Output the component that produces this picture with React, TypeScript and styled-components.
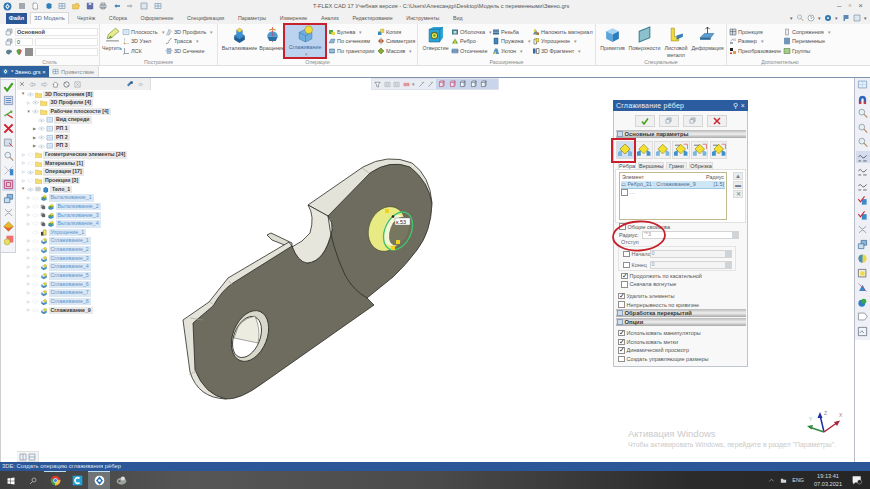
import React from "react";
import styled, { createGlobalStyle } from "styled-components";

const Global = createGlobalStyle`
  html, body { margin: 0; padding: 0; background: #fff; }
  * { box-sizing: border-box; }
  body { font-family: "Liberation Sans", "Noto Sans", Arial, sans-serif; font-size: 6px; color: #4c4c4c; }
`;

const B = "#3f86c8", Y = "#f2dc3a", G = "#58a83c", R = "#d8343c", D = "#4a5560";
const icons: Record<string, React.ReactNode> = {
  logo: <><circle cx="8" cy="8" r="7" fill="#2f78b8" /><path d="M8 3l4 5-4 5-4-5z" fill="#fff" /><circle cx="8" cy="8" r="1.6" fill="#2f78b8" /></>,
  menu: <path d="M2 4h12M2 8h12M2 12h12" stroke="#44505c" strokeWidth="1.8" />,
  doc: <path d="M4 2h6l3 3v9H4z" fill="#fff" stroke="#55606a" />,
  blue: <path d="M3 4l5-2 5 2v8l-5 2-5-2z" fill="#2f7fb8" />,
  grid: <path d="M2 3h12v10H2zM2 8h12M8 3v10" fill="#e8f0f8" stroke="#5a7a98" />,
  folderO: <path d="M1 5h5l1-2h6v3h2l-2 8H1z" fill="#f2c85a" stroke="#c09020" strokeWidth=".7" />,
  save: <path d="M2 2h12v12H2z M5 2v4h6V2 M5 9h6v5H5z" fill="#6a78b8" stroke="#47558f" strokeWidth=".7" />,
  print: <path d="M4 2h8v4H4zM2 6h12v6H2zM5 10h6v4H5z" fill="#dde2e6" stroke="#5a6670" />,
  undo: <path d="M3 8l4-4v2.5h7v3H7V12z" fill="#2f78b8" />,
  redo: <path d="M13 8L9 4v2.5H2v3h7V12z" fill="#aab2b8" />,
  pic: <path d="M2 2h12v12H2z" fill="#dfe6ee" stroke="#56708c" />,
  plane: <><path d="M2 3h12v10H2z" fill="#e4effa" stroke="#6f93bb" /><path d="M2 8h12M8 3v10" stroke="#a4bfdc" strokeWidth=".6" /></>,
  layers: <><path d="M5 2h9v8H5z" fill="#cfd8e2" stroke="#6b7884" /><path d="M2 6h9v8H2z" fill="#eef2f6" stroke="#6b7884" /></>,
  palette: <path d="M2 7c0-4 12-5 12 0 0 3-4 2-5 6-3 1-7-2-7-6z" fill="#5c7f8c" />,
  shield: <><path d="M8 2l5 2c0 5-2 8-5 10-3-2-5-5-5-10z" fill={G} /><path d="M8 2l5 2c0 5-2 8-5 10z" fill="#d8556c" /></>,
  pen: <><path d="M2 14h12" stroke="#888" /><path d="M3 12l1-4 7-6 3 3-7 6z" fill="#e7ec8c" stroke="#8a9048" strokeWidth=".7" /><path d="M4 12l2-3 2 2z" fill="#6aa040" /></>,
  node: <><path d="M5 2v12M5 13h9" stroke={D} strokeWidth=".8" strokeDasharray="1.4 1" /><circle cx="5" cy="13" r="1.6" fill="#d09020" /></>,
  lcs: <path d="M5 2v11h9M5 13l-3 2" stroke="#4a5a6c" strokeWidth="1.1" fill="none" />,
  profile: <path d="M3 14L8 3l5 3-5 8zM8 3v11" fill="#e8eef4" stroke="#6c8090" strokeWidth=".8" />,
  trace: <path d="M2 13c5 0 5-2 6-5s3-5 6-5" stroke="#334" strokeWidth="1.1" fill="none" strokeDasharray="3 1" />,
  section: <><path d="M4 3h8v3H4zM4 9h8v4H4z" fill="#a7c4dd" stroke="#557" strokeWidth=".5" /><path d="M1 7.5h14" stroke="#2f78b8" /></>,
  extrude: <><path d="M3 9l5-3 5 3-5 3z" fill="#2e80c0" /><path d="M3 9v4l5 3v-4zM13 9v4l-5 3v-4z" fill="#1e5f96" /><path d="M8 2l3 2-3 2-3-2z" fill="#f1d84c" stroke="#8c7a20" strokeWidth=".4" /><path d="M5 4v5l3 2V6zM11 4v5L8 11V6z" fill="#3f92d0" /></>,
  revolve: <><path d="M3 10a5 5 0 0 1 10 0z" fill="#4d9ad2" /><path d="M8 1v14" stroke={R} strokeWidth=".7" strokeDasharray="2 1" /><path d="M3 10h10l-2 4H5z" fill="#2a6ea6" /><path d="M5 4q3-2 6 0" stroke="#d08a20" fill="none" /></>,
  smooth: <><path d="M2 7l6-3 6 3v6l-6 3-6-3z" fill="#6eaede" stroke="#3b76a8" strokeWidth=".5" /><path d="M8 10v6M2 7l6 3 6-3" stroke="#3b76a8" strokeWidth=".5" fill="none" /><circle cx="11" cy="4.5" r="3.6" fill={Y} stroke="#9a8a1a" strokeWidth=".5" /></>,
  bool: <><path d="M2 4h8v8H2z" fill={G} /><path d="M7 8h7v6H7z" fill="#e9d84e" /></>,
  loft: <path d="M2 12L6 4h8l-2 8z" fill="#8fb2d0" stroke="#3f6c96" strokeWidth=".7" />,
  path: <><path d="M3 4h10v8H3z" fill="#80a8cc" stroke="#33689a" /><path d="M3 8h10" stroke="#fff" /></>,
  copy: <><path d="M2 7h7v7H2z" fill="#3a88c4" /><path d="M7 2h7v7H7z" fill="#e7d64a" stroke="#897a1c" strokeWidth=".5" /></>,
  sym: <><path d="M2 8l5-5v10zM14 8L9 3v10z" fill="#b0562c" /><path d="M8 1v14" stroke="#333" strokeWidth=".6" /></>,
  array: <path d="M8 2l6 6-6 6-6-6z" fill="#87a83a" stroke="#506a20" />,
  hole: <><path d="M2 3l4-2h9v10l-3 4H2z" fill="#2aa3d8" /><path d="M2 3h10v12H2zM12 3l3-2" fill="none" stroke="#1b648e" strokeWidth=".6" /><circle cx="7" cy="9" r="3" fill="#e8e050" stroke="#5a6a2a" /><circle cx="7" cy="9" r="1.2" fill={G} /></>,
  shell: <><path d="M2 3h12v10H2z" fill="#3f7c9a" /><path d="M5 6h6v5H5z" fill="#cfe0c8" /></>,
  rib: <><path d="M2 13L8 3l6 10z" fill="#5fa040" /><path d="M8 3l2 10H6z" fill={Y} /></>,
  cut: <><path d="M2 4h12v8H2z" fill="#8cb0d4" stroke="#4a7298" /><path d="M1 8h14" stroke="#33507a" /></>,
  thread: <><path d="M2 3h12v10H2z" fill="#3a6c98" /><path d="M2 6h12M2 9h12" stroke="#bcd0e4" /></>,
  spring: <path d="M4 2h8v12H4z" fill="#4384b8" stroke="#27587e" />,
  draft: <><path d="M2 14L6 3h5l3 11z" fill="#5a92c0" /><path d="M3 14h5V8z" fill="#e6d648" /></>,
  mat: <><path d="M2 13L7 3l7 10z" fill="#6e8ea0" /><circle cx="6" cy="5" r="2.6" fill="#e6c838" /><path d="M9 9h5v5H9z" fill="#b8722a" /></>,
  simp: <><path d="M4 4h5v10H4z" fill="none" stroke="#333" /><path d="M8 3h5v7H8z" fill={Y} stroke="#8a7a10" /></>,
  frag: <><path d="M2 3h5v10H2z" fill="#3566a0" /><path d="M9 3h5v10H9z" fill="none" stroke="#222" /><path d="M7 8h2" stroke="#222" /></>,
  cube: <><path d="M2 5l6-3 6 3-6 3z" fill="#a6d4f2" /><path d="M2 5v7l6 3V8z" fill="#5aa6dc" /><path d="M14 5v7l-6 3V8z" fill="#2a7dbc" /></>,
  surf: <path d="M3 5l10-4v10L3 15z" fill="#8cc0cc" stroke="#3c7f92" />,
  sheet: <><path d="M3 2h3v8h4v4H3z" fill={Y} stroke="#a6901c" strokeWidth=".6" /><path d="M8 9l6-2v3l-6 3z" fill="#3a7fb8" /></>,
  deform: <><path d="M1 11l4-4h9l-3 4z" fill="#5a9ccf" stroke="#2e6a98" strokeWidth=".5" /><path d="M1 11h10v2H1z" fill="#2e6a98" /><path d="M8 1v6M6 3l2-2 2 2" stroke="#222" fill="none" strokeWidth=".7" /></>,
  proj: <path d="M2 2h12v12H2zM2 7h12M7 2v12" fill="#cfd7de" stroke="#47525c" />,
  size: <><path d="M2 10h6v4H2z" fill="#9aa8b4" /><path d="M8 3h6v5H8z" fill="#c7d2dc" /><path d="M3 8l5-4" stroke="#456" /></>,
  trans: <><path d="M2 2h6v6H2z" fill="#222" /><path d="M8 8h6v6H8z" fill="#d8a040" /><path d="M2 11h4v3H2z" fill={R} /></>,
  mate: <path d="M5 2h6v12H5z" fill="#e8eaec" stroke="#68727c" />,
  vars: <path d="M3 2h10v12H3zM3 6h10M3 10h10" fill="#7ea8cc" stroke="#3f6a90" />,
  group: <path d="M2 3h12v10H2z" fill="#a6cc8a" stroke="#3e7028" />,
  help: <><circle cx="8" cy="8" r="6" fill="#fff" stroke="#56646e" /><path d="M6 6q2-2 4 0t-2 3v1" stroke="#56646e" fill="none" /></>,
  gear: <><circle cx="8" cy="8" r="6" fill="#2f78b0" /><circle cx="8" cy="8" r="2.2" fill="#dcecf7" /></>,
  flag: <path d="M3 2h10v8H6v4H3z" fill="#5b88b4" />,
  okGreen: <path d="M2 9l4 5 8-11" stroke="#3ea018" strokeWidth="3" fill="none" />,
  xRed: <path d="M2 2l12 12M14 2L2 14" stroke="#cf2430" strokeWidth="3" />,
  rows: <><path d="M2 2h12v12H2z" fill="#dce4f4" stroke="#6a7ea6" /><path d="M4 5h8M4 8h8M4 11h8" stroke="#2f60a0" /></>,
  branch: <><path d="M2 10l10-6" stroke={G} strokeWidth="2" /><path d="M6 8l8 5" stroke={R} strokeWidth="2" /><circle cx="12" cy="4" r="1.8" fill={G} /></>,
  dim: <><path d="M2 3h10v10H2z" fill="#d4dee8" stroke="#7a8a9a" /><path d="M9 9l5 5" stroke={R} strokeWidth="1.4" /></>,
  zoomI: <><circle cx="7" cy="6" r="4.2" fill="#e6eef6" stroke="#7e8c98" /><path d="M10 9l5 5" stroke="#b08a60" strokeWidth="1.6" /></>,
  angle: <><path d="M2 14L14 2M2 2l12 12" stroke="#9ca8b4" /><path d="M10 6h5v9h-5z" fill="#3f86c8" /></>,
  pink: <path d="M2 2h12v12H2zM5 5h6v6H5z" fill="#e8c8d4" stroke="#b03a70" strokeWidth="1.2" />,
  boxes: <><path d="M6 2h8v7H6z" fill="#8ab4d8" stroke="#3a6a94" /><path d="M2 7h8v7H2z" fill="#c8dcec" stroke="#3a6a94" /></>,
  arc: <path d="M3 3q5 8 10 0M3 13q5-8 10 0" stroke="#7a8690" fill="none" />,
  yellowD: <><path d="M8 1l7 7-7 7-7-7z" fill="#e8b82a" stroke="#8a6a10" strokeWidth=".6" /><path d="M8 10l7-2-7 7-7-7z" fill={R} opacity=".65" /></>,
  redSq: <><path d="M5 1h10v10H5z" fill="#f0726e" /><circle cx="6" cy="10" r="4.4" fill="#eadf5c" stroke="#7e7a24" strokeWidth=".5" /></>,
  tbox: <><path d="M3 5l5-3 5 3v7l-5 3-5-3z" fill="#2a7dc0" /><path d="M3 5l5 3 5-3M8 8v7" stroke="#a8d0ec" strokeWidth=".6" fill="none" /></>,
  ext: <><path d="M3 8l6-3 5 3-6 3z" fill="#4fa038" stroke="#2a601c" strokeWidth=".5" /><path d="M3 8v4l5 3v-4z" fill="#2b78b4" /><path d="M14 8v4l-6 3v-4z" fill="#3a92cc" /><path d="M6 6l4-4 4 3-4 3z" fill={Y} stroke="#806f14" strokeWidth=".5" /></>,
  sm: <><path d="M3 8l5-3 6 3-6 3z" fill="#fff" stroke="#357ba8" strokeWidth=".7" /><path d="M3 8v4l5 3v-4zM14 8v4l-6 3v-4z" fill="#4b94c8" stroke="#2b6a94" strokeWidth=".4" /><circle cx="11" cy="6" r="3" fill={Y} stroke="#6e7c1a" strokeWidth=".6" /></>,
  mini: <><path d="M3 3h7v7H3z" fill="#ddd" stroke="#333" /><path d="M6 6h7v7H6z" fill="#667" stroke="#222" /></>,
  folder: <path d="M1 4h5l1 2h8v8H1z" fill="#f8dc70" stroke="#c9a838" strokeWidth=".8" />,
  eye: <><path d="M1 8q7-7 14 0-7 7-14 0z" fill="#fff" stroke="#a6b4c0" /><circle cx="8" cy="8" r="1.8" fill="#a6bccc" /></>,
  eyeDim: <path d="M1 8q7-7 14 0-7 7-14 0z" fill="#fff" stroke="#d8dee4" />,
  simpl: <><path d="M2 6h6v8H2z" fill="#444" /><path d="M7 2h6v11H7z" fill="#f6e85c" stroke="#8e8018" /></>,
  close: <path d="M3 3l10 10M13 3L3 13" stroke="#555" strokeWidth="1.6" />,
  back: <path d="M2 8l5-5v3h7v4H7v3z" fill="none" stroke="#8896a2" strokeWidth="1.1" />,
  fwd: <path d="M14 8L9 3v3H2v4h7v3z" fill="none" stroke="#8896a2" strokeWidth="1.1" />,
  home: <path d="M2 8l6-6 6 6h-2v6H4V8z" fill="#fff" stroke="#46525e" strokeWidth="1.2" />,
  clock: <><circle cx="8" cy="8" r="6" fill="#fff" stroke="#46525e" strokeWidth="1.6" /><path d="M4 4l8 8" stroke="#46525e" /></>,
  xbox: <path d="M2 2h12v12H2zM5 5l6 6M11 5l-6 6" fill="#f4f4f4" stroke="#6e7a84" />,
  wrench: <><path d="M2 10l6-6 3 3-6 6z" fill="#4c7fa8" /><circle cx="11" cy="5" r="3" fill="#2f6898" /></>,
  funnel: <path d="M2 3h12l-4 5v6l-4-2V8z" fill="#fff" stroke="#4a5660" strokeWidth="1.2" />,
  gbox: <path d="M2 3h12v10H2zM5 6h6v4H5z" fill="#eee" stroke="#8a949c" />,
  line: <><path d="M3 13L13 3" stroke="#48708a" strokeWidth="1.2" /><path d="M8 3h6" stroke={G} /></>,
  redbar: <path d="M2 5h12v6H2z" fill="#e49aa4" stroke="#cf6e7c" />,
  cubeP: <path d="M3 5h8v9H3zM3 5l2-3h8l-2 3M13 2v9l-2 3" fill="#f0dde6" stroke="#b0285a" strokeWidth="1.1" />,
  cubeN: <path d="M3 5h8v9H3zM3 5l2-3h8l-2 3M13 2v9l-2 3" fill="#eef2f8" stroke="#3a4a5a" strokeWidth="1.1" />,
  magnet: <><path d="M3 14V8a5 5 0 0 1 10 0v6h-3V8a2 2 0 0 0-4 0v6z" fill="#2f62c0" stroke="#1e3f86" strokeWidth=".4" /><path d="M3 14h3v-3H3zM10 14h3v-3h-3z" fill="#d8303c" /></>,
  tilde: <path d="M2 7q3-4 5 0t7-2M2 13h4M9 13h5" stroke="#333" fill="none" strokeWidth="1" />,
  checkBox: <><path d="M7 6h7v8H7z" fill="#3a8cc8" /><path d="M2 6l3 4 6-8" stroke="#d02838" strokeWidth="1.6" fill="none" /></>,
  ballG: <><circle cx="8" cy="8" r="6" fill="#e6d848" /><path d="M8 2a6 6 0 0 0 0 12z" fill="#4a8cc8" /></>,
  sqY: <><path d="M2 2h11v11H2z" fill="#eee" stroke="#555" /><path d="M5 5h6v6H5z" fill={Y} /></>,
  triB: <><path d="M3 13L8 4l5 9z" fill="#3a86c8" /><path d="M2 2l12 12" stroke={R} strokeWidth=".8" /></>,
  ballB: <><circle cx="7" cy="9" r="5" fill="#2d7fc0" /><circle cx="10" cy="6" r="3.6" fill="#3aa83c" /></>,
  tag: <path d="M2 3h9l4 5-4 5H2z" fill="#fff" stroke="#6e7a84" />,
  frame: <path d="M2 2h12v12H2zM4 10l3-3 3 3" fill="#f0f4f8" stroke="#526270" />,
  split: <path d="M2 2h12v12H2zM8 2v12" fill="#eef2f7" stroke="#5e7288" />,
  splitH: <path d="M2 2h12v12H2zM2 8h12" fill="#eef2f7" stroke="#5e7288" />,
  win: <path d="M1 3l6-1v5.500H1zM8 2l7-1v6.500H8zM1 8.500h6V14l-6-1zM8 8.500h7V15l-7-1z" fill="#fff" />,
  search: <><circle cx="10" cy="6" r="4" fill="none" stroke="#ddd" strokeWidth="1.2" /><path d="M7 9l-5 5" stroke="#ddd" strokeWidth="1.3" /></>,
  chrome: <><circle cx="8" cy="8" r="7" fill="#d8382c" /><path d="M8 8L2 5a7 7 0 0 0 5 10z" fill="#3d9c45" /><path d="M8 8l7-1a7 7 0 0 1-8 8z" fill="#f2c531" /><circle cx="8" cy="8" r="3" fill="#4a84e0" stroke="#fff" /></>,
  cblue: <><path d="M1 1h14v14H1z" fill="#21a3d6" /><path d="M11 5a4 4 0 1 0 0 6" fill="none" stroke="#fff" strokeWidth="2.200" /></>,
  tflex: <><circle cx="8" cy="8" r="7" fill="#fff" /><path d="M8 2l5 6-5 6-5-6z" fill="#1f6fb8" /><circle cx="8" cy="8" r="2" fill="#fff" /></>,
  app: <><ellipse cx="8" cy="9" rx="7" ry="5" fill="#9aa49a" /><circle cx="10" cy="5" r="3" fill="#ddd" /><circle cx="5" cy="9" r="1.6" fill="#556" /></>,
  caret: <path d="M3 10l5-5 5 5" stroke="#ccc" fill="none" strokeWidth="1.3" />,
  trayF: <path d="M2 4h5l1 2h6v7H2z" fill="#cfd6dc" />,
  note: <><path d="M1 2h13v10H5l-3 3v-3H1z" fill="#f0f0f0" /><circle cx="12" cy="11" r="3.400" fill="#222" stroke="#eee" strokeWidth=".6" /></>,
};

const SvgBox = styled.svg<{ $s: number }>`
  width: ${(p) => p.$s}px;
  height: ${(p) => p.$s}px;
  flex: none;
  display: block;
`;
const Ico = ({ k, s = 8 }: { k: string; s?: number }) => (
  <SvgBox $s={s} viewBox="0 0 16 16">{icons[k]}</SvgBox>
);

/* ---------- shell ---------- */
const Page = styled.div`
  width: 870px;
  height: 489px;
  display: flex;
  flex-direction: column;
  overflow: hidden;
  background: #fff;
`;
const TitleBar = styled.div`
  height: 12px;
  background: #f1f1f1;
  display: flex;
  align-items: center;
  position: relative;
  padding: 0 4px 0 3px;
`;
const Quick = styled.div`
  display: flex;
  align-items: center;
  gap: 5.6px;
  flex: 1;
`;
const TitleText = styled.div`
  position: absolute;
  left: 313px;
  top: 2px;
  font-size: 5.700px;
  line-height: 9px;
  color: #555;
  white-space: nowrap;
`;
const WinControls = styled.div`
  display: flex;
  gap: 7px;
  align-items: center;
  font-size: 8px;
  line-height: 10px;
  color: #666;
  padding-right: 3px;
`;
const MenuRow = styled.div`
  height: 12px;
  background: #f1f1f1;
  display: flex;
  align-items: flex-end;
  padding-left: 6px;
`;
const FileTab = styled.div`
  width: 21px;
  height: 11px;
  background: #2b5797;
  color: #fff;
  font-size: 5.8px;
  font-weight: bold;
  line-height: 11px;
  text-align: center;
  margin-right: 3px;
`;
const ActiveMenu = styled.div`
  width: 39px;
  height: 12px;
  background: #fbfbfb;
  border: 1px solid #d8d8d8;
  border-bottom: 0;
  color: #4a6e96;
  font-size: 6px;
  line-height: 11px;
  text-align: center;
  margin-right: 8px;
`;
const MenuItems = styled.div`
  display: flex;
  gap: 13.6px;
  flex: 1;
  height: 12px;
  align-items: center;
  font-size: 5.300px;
  color: #555;
`;
const MenuRight = styled.div`
  display: flex;
  align-items: center;
  gap: 3.200px;
  height: 12px;
  padding-right: 3px;
  font-size: 5px;
  color: #667;
`;

const Ribbon = styled.div`
  height: 42px;
  background: #fbfbfb;
  border-bottom: 1px solid #e0e0e0;
  display: flex;
`;
const Group = styled.div<{ $w: number; $last?: boolean }>`
  width: ${(p) => p.$w}px;
  flex: none;
  display: flex;
  flex-direction: column;
  border-right: ${(p) => (p.$last ? "none" : "1px solid #e3e3e3")};
`;
const GroupBody = styled.div`
  flex: 1;
  display: flex;
  padding: 2px 0 0 2px;
  min-height: 0;
`;
const GroupLabel = styled.div`
  height: 8px;
  line-height: 8px;
  margin-bottom: -1px;
  text-align: center;
  font-size: 5.2px;
  color: #8a8a8a;
`;
const Big = styled.div<{ $w: number; $on?: boolean }>`
  width: ${(p) => p.$w}px;
  height: 32px;
  flex: none;
  display: flex;
  flex-direction: column;
  align-items: center;
  font-size: 5.300px;
  line-height: 6.500px;
  text-align: center;
  color: ${(p) => (p.$on ? "#3a68a0" : "#505050")};
  background: ${(p) => (p.$on ? "#bcd3ef" : "transparent")};
  outline: ${(p) => (p.$on ? "2px solid #c9202e" : "none")};
  margin: ${(p) => (p.$on ? "-1px 3px 0 0" : "0")};
  white-space: nowrap;
`;
const BigIconSlot = styled.div`
  height: 17px;
  display: flex;
  align-items: flex-end;
  margin-bottom: 2px;
`;
const Col = styled.div<{ $w: number }>`
  width: ${(p) => p.$w}px;
  flex: none;
  display: flex;
  flex-direction: column;
  padding-top: 1px;
  gap: 0.6px;
`;
const Small = styled.div`
  height: 9px;
  display: flex;
  align-items: center;
  gap: 1px;
  font-size: 5.500px;
  color: #505050;
  white-space: nowrap;
`;
const Arrow = styled.span`
  color: #999;
  font-size: 5px;
  margin-left: 3px;
`;
const StyleRow = styled.div`
  height: 9.500px;
  display: flex;
  align-items: center;
  gap: 2px;
  padding-left: 3px;
`;
const Combo = styled.div<{ $w: number; $bold?: boolean }>`
  width: ${(p) => p.$w}px;
  height: 8px;
  border: 1px solid #e6e6e6;
  background: #fff;
  font-size: 5.600px;
  line-height: 6px;
  padding-left: 1px;
  font-weight: ${(p) => (p.$bold ? "bold" : "normal")};
  color: #444;
`;
const Swatch = styled.div`
  width: 8px;
  height: 8px;
  background: #8f8f8f;
`;

const DocTabs = styled.div`
  height: 11px;
  background: #fff;
  display: flex;
  align-items: stretch;
`;
const DocActive = styled.div`
  width: 49px;
  background: #2e629e;
  color: #fff;
  font-size: 5.8px;
  display: flex;
  align-items: center;
  gap: 2px;
  padding-left: 2px;
`;
const DocOther = styled.div`
  width: 50px;
  background: #f3f3f3;
  border-right: 1px solid #ddd;
  color: #888;
  font-size: 5.6px;
  display: flex;
  align-items: center;
  gap: 2px;
  padding-left: 3px;
`;
const Divider = styled.div`
  height: 1px;
  background: #7d93ad;
`;

const Main = styled.div`
  flex: 1;
  display: flex;
  min-height: 0;
`;
const LeftRail = styled.div`
  width: 17px;
  flex: none;
  background: #fff;
  border-left: 1px solid #cfcfcf;
  padding-top: 1px;
`;
const LeftStrip = styled.div`
  width: 15px;
  height: 174px;
  background: #f3f4f8;
  border: 1px solid #cfd0e4;
  border-left: 0;
  display: flex;
  flex-direction: column;
  align-items: center;
  padding-top: 1px;
  gap: 2.500px;
`;
const RailBtn = styled.div<{ $on?: boolean }>`
  width: 13px;
  height: 11.500px;
  display: flex;
  align-items: center;
  justify-content: center;
  background: ${(p) => (p.$on ? "#d4dcf0" : "transparent")};
`;
const Canvas = styled.div`
  flex: 1;
  position: relative;
  background: #fff;
`;
const RightRail = styled.div`
  width: 16px;
  flex: none;
  background: #fff;
  border-left: 1px solid #b8bcc8;
`;
const RightStrip = styled.div`
  background: #eff0f5;
  height: 262px;
  display: flex;
  flex-direction: column;
  align-items: center;
  padding-top: 1px;
  gap: 2.900px;
`;
const StripBtn = styled.div<{ $on?: boolean }>`
  width: 14px;
  height: 11.600px;
  display: flex;
  align-items: center;
  justify-content: center;
  background: ${(p) => (p.$on ? "#d5dcee" : "transparent")};
`;
const StatusBar = styled.div`
  height: 9px;
  background: #2b5698;
  color: #dfe8f4;
  font-size: 5.8px;
  line-height: 9px;
  padding-left: 2px;
`;
const Taskbar = styled.div`
  height: 18px;
  background: linear-gradient(90deg, #3d3d3d 0%, #565656 22%, #4a4a4a 50%, #2b2b2b 80%, #252525 100%);
  display: flex;
  align-items: stretch;
  color: #ddd;
`;
const Task = styled.div<{ $on?: boolean; $bar?: boolean; $w: number }>`
  width: ${(p) => p.$w}px;
  flex: none;
  display: flex;
  align-items: center;
  justify-content: center;
  background: ${(p) => (p.$on ? "#6f7477" : "transparent")};
  border-top: 1px solid ${(p) => (p.$bar ? "#bcdcf0" : "transparent")};
`;
const Tray = styled.div`
  margin-left: auto;
  display: flex;
  align-items: center;
  gap: 5px;
  padding-right: 8px;
  font-size: 5.4px;
`;
const Clock = styled.div`
  text-align: center;
  line-height: 8px;
  font-size: 5.6px;
  margin: 0 5px 0 5px;
`;

/* ---------- tree ---------- */
const TreeToolbar = styled.div`
  position: absolute;
  left: 0;
  top: 0;
  width: 134px;
  height: 12px;
  background: #efefef;
  border-right: 1px solid #ddd;
  display: flex;
  align-items: center;
  padding: 0 7px 0 2px;
  gap: 4.300px;
`;
const Push = styled.div`
  flex: 1;
`;
const Tree = styled.div`
  position: absolute;
  left: 0;
  top: 12px;
  width: 150px;
`;
const TreeRow = styled.div<{ $lvl: number }>`
  height: 8.650px;
  display: flex;
  align-items: center;
  gap: 1px;
  padding-left: ${(p) => p.$lvl * 5.5 + 3.5}px;
  white-space: nowrap;
`;
const Tw = styled.span`
  width: 5px;
  flex: none;
  font-size: 4.200px;
  line-height: 8px;
  color: #777;
  text-align: center;
`;
const TreeLabel = styled.span<{ $mode: string }>`
  font-size: 5.250px;
  line-height: 7.500px;
  padding: 0 2px;
  font-weight: ${(p) => (p.$mode === "sel" ? "normal" : "bold")};
  color: ${(p) => (p.$mode === "sel" ? "#5b95d0" : "#3c3c3c")};
  background: ${(p) => (p.$mode === "sel" ? "#dbe7f3" : "#e9e9e9")};
`;

/* ---------- canvas overlays ---------- */
const ViewBar = styled.div`
  position: absolute;
  left: 354px;
  top: 0;
  width: 128px;
  height: 12px;
  display: flex;
  background: #e9ecf2;
  border: 1px solid #dfe2ea;
`;
const ViewPart = styled.div<{ $tint?: boolean }>`
  display: flex;
  align-items: center;
  gap: ${(p) => (p.$tint ? 3 : 2.500)}px;
  padding: 0 2px;
  background: ${(p) => (p.$tint ? "#c9d5ea" : "transparent")};
  flex: ${(p) => (p.$tint ? 1 : "none")};
  font-size: 5px;
  color: #888;
`;
const PartSvg = styled.svg`
  position: absolute;
  left: 133px;
  top: 72px;
  width: 310px;
  height: 330px;
`;
const TriadSvg = styled.svg`
  position: absolute;
  left: 783px;
  top: 328px;
  width: 50px;
  height: 40px;
`;
const Watermark = styled.div`
  position: absolute;
  left: 611px;
  top: 350px;
  color: #cacaca;
  font-size: 9.500px;
  line-height: 12px;
  white-space: nowrap;
`;
const WatermarkSub = styled.div`
  font-size: 6.900px;
  line-height: 8px;
  margin-top: 1px;
`;
const CornerTools = styled.div`
  position: absolute;
  left: 0;
  bottom: 0;
  width: 22px;
  height: 11px;
  background: #f4f4f4;
  border: 1px solid #e0e0e0;
  border-left: 0;
  display: flex;
  align-items: center;
  padding-left: 2px;
  gap: 1px;
`;

/* ---------- dialog ---------- */
const Dialog = styled.div`
  position: absolute;
  left: 596px;
  top: 22px;
  width: 135px;
  height: 267px;
  background: #f8f8f8;
  border: 1px solid #bfc5cc;
  border-top: 0;
  display: flex;
  flex-direction: column;
`;
const DlgHead = styled.div`
  height: 11px;
  margin: 0 -1px;
  background: #2a5c9f;
  color: #e8f0f8;
  font-size: 7px;
  line-height: 11px;
  padding: 0 3px;
  display: flex;
  justify-content: space-between;
  letter-spacing: 0.2px;
`;
const DlgBtns = styled.div`
  height: 19px;
  display: flex;
  justify-content: center;
  align-items: center;
  gap: 4px;
  flex: none;
`;
const DlgBtn = styled.div`
  width: 20px;
  height: 12px;
  background: #f0f0f0;
  border: 1px solid #d6d6d6;
  display: flex;
  align-items: center;
  justify-content: center;
`;
const Section = styled.div`
  height: 8px;
  flex: none;
  display: flex;
  align-items: center;
  gap: 2px;
  background: linear-gradient(#b8b8b8, #efefef 50%, #a8a8a8);
  font-size: 5.800px;
  font-weight: bold;
  color: #333;
  margin: 0 1px 0 2px;
`;
const SecMark = styled.span`
  width: 5.500px;
  height: 5.500px;
  background: #cfdcec;
  border: 1px solid #8aa0ba;
  margin-left: 1px;
  flex: none;
`;
const ShapeRow = styled.div`
  height: 24px;
  flex: none;
  display: flex;
  align-items: center;
  padding-left: 2px;
  gap: 1.200px;
`;
const ShapeBtn = styled.div<{ $on?: boolean }>`
  width: ${(p) => (p.$on ? 18 : 17.400)}px;
  height: 18px;
  background: ${(p) => (p.$on ? "#cfe0f2" : "#f1f1f1")};
  border: 1px solid #ddd;
  display: flex;
  align-items: center;
  justify-content: center;
`;
const RedFrame = styled.div`
  position: absolute;
  left: -3px;
  top: 38px;
  width: 25px;
  height: 25px;
  border: 2px solid #c9202e;
`;
const Tabs = styled.div`
  height: 7px;
  flex: none;
  display: flex;
  padding-left: 4px;
  font-size: 5.500px;
  line-height: 7px;
  color: #444;
  gap: 2px;
`;
const Tab = styled.div<{ $on?: boolean; $w: number }>`
  width: ${(p) => p.$w}px;
  text-align: center;
  background: ${(p) => (p.$on ? "#fff" : "#eee")};
  border: 1px solid #ddd;
  border-bottom: 0;
  line-height: 6px;
`;
const Pane = styled.div`
  height: 54px;
  flex: none;
  margin: 0 1px 0 1px;
  background: #fff;
  border: 1px solid #e2e2e2;
  padding: 2px 0 0 3px;
  display: flex;
  gap: 6px;
`;
const ListBox = styled.div`
  width: 108px;
  height: 48px;
  border: 1px solid #c2b98c;
  background: #fff;
  flex: none;
  font-size: 5.400px;
  padding: 1px;
`;
const ListHead = styled.div`
  display: flex;
  justify-content: space-between;
  line-height: 7px;
  color: #555;
  padding: 0 1px;
`;
const ListSel = styled.div`
  display: flex;
  align-items: center;
  gap: 2px;
  background: #cfe6f6;
  border-bottom: 1px solid #9cc8e4;
  color: #4f6f90;
  height: 7.500px;
  justify-content: space-between;
  padding-right: 1px;
  white-space: nowrap;
`;
const ListRow = styled.div`
  display: flex;
  align-items: center;
  gap: 2px;
  height: 8px;
  color: #777;
`;
const SideBtns = styled.div`
  display: flex;
  flex-direction: column;
  gap: 1px;
`;
const SideBtn = styled.div`
  width: 10px;
  height: 8px;
  background: #ececec;
  border: 1px solid #dcdcdc;
  color: #6a7f96;
  font-size: 6px;
  line-height: 6px;
  text-align: center;
`;
const Check = styled.span<{ $on?: boolean }>`
  width: 6.500px;
  height: 6.500px;
  flex: none;
  background: #fff;
  border: 1px solid #8f8f8f;
  color: #222;
  font-size: 7px;
  line-height: 4.500px;
  text-align: center;
  overflow: visible;
`;
const CheckRow = styled.div<{ $pad: number; $h?: number }>`
  height: ${(p) => p.$h ?? 8.600}px;
  flex: none;
  display: flex;
  align-items: center;
  gap: 2px;
  padding-left: ${(p) => p.$pad}px;
  font-size: 5.500px;
  color: #555;
  white-space: nowrap;
`;
const RadiusRow = styled.div`
  height: 10px;
  flex: none;
  display: flex;
  align-items: center;
  padding-left: 5px;
  font-size: 5.500px;
  color: #555;
  gap: 3px;
`;
const Field = styled.div<{ $w: number; $tone?: string }>`
  width: ${(p) => p.$w}px;
  height: 7.500px;
  background: ${(p) => p.$tone ?? "#fff"};
  border: 1px solid #d4d4d4;
  font-size: 5.500px;
  line-height: 5.500px;
  padding-left: 1px;
  position: relative;
  color: #999;
  &::after {
    content: "";
    position: absolute;
    right: 0;
    top: 0;
    bottom: 0;
    width: 6px;
    background: #cfd4d8;
  }
`;
const OffsetTitle = styled.div`
  height: 5.500px;
  flex: none;
  padding-left: 7px;
  font-size: 5.500px;
  line-height: 5px;
  color: #666;
`;
const OffsetBox = styled.div`
  height: 25px;
  flex: none;
  margin: 0 11px 1px 4px;
  border: 1px solid #e4e4e4;
  background: #f8f8f8;
  padding-top: 2px;
`;
const OffsetRow = styled.div`
  height: 11px;
  display: flex;
  align-items: center;
  gap: 2px;
  padding-left: 4px;
  font-size: 5.500px;
  color: #666;
`;
const OffsetName = styled.span`
  width: 16px;
`;
const Spacer = styled.div<{ $h: number }>`
  height: ${(p) => p.$h}px;
  flex: none;
`;
const Ellipse = styled.svg`
  position: absolute;
  left: 593px;
  top: 142px;
  width: 60px;
  height: 34px;
  pointer-events: none;
`;

/* ---------- data ---------- */
type Item = { t: string; i: string; a?: boolean };
const groups: { w: number; label: string; parts: any[] }[] = [
  { w: 118, label: "Построения", parts: [
    { big: 20, t: "Чертить", i: "pen" },
    { col: 43, items: [{ t: "Плоскость", i: "plane", a: true }, { t: "3D Узел", i: "node" }, { t: "ЛСК", i: "lcs" }] },
    { col: 48, items: [{ t: "3D Профиль", i: "profile", a: true }, { t: "Трасса", i: "trace", a: true }, { t: "3D Сечение", i: "section" }] },
  ] },
  { w: 200, label: "Операции", parts: [
    { big: 39, t: "Выталкивание", i: "extrude" },
    { big: 26, t: "Вращение", i: "revolve" },
    { big: 40, t: "Сглаживание", i: "smooth", on: true },
    { col: 49, items: [{ t: "Булева", i: "bool", a: true }, { t: "По сечениям", i: "loft" }, { t: "По траектории", i: "path", a: true }] },
    { col: 40, items: [{ t: "Копия", i: "copy" }, { t: "Симметрия", i: "sym" }, { t: "Массив", i: "array", a: true }] },
  ] },
  { w: 178, label: "Расширенные", parts: [
    { big: 31, t: "Отверстие", i: "hole" },
    { col: 41, items: [{ t: "Оболочка", i: "shell", a: true }, { t: "Ребро", i: "rib" }, { t: "Отсечение", i: "cut" }] },
    { col: 40, items: [{ t: "Резьба", i: "thread" }, { t: "Пружина", i: "spring", a: true }, { t: "Уклон", i: "draft", a: true }] },
    { col: 62, items: [{ t: "Наложить материал", i: "mat" }, { t: "Упрощение", i: "simp", a: true }, { t: "3D Фрагмент", i: "frag", a: true }] },
  ] },
  { w: 131, label: "Специальные", parts: [
    { big: 29, t: "Примитив", i: "cube" },
    { big: 35, t: "Поверхности", i: "surf" },
    { big: 28, t: "Листовой", t2: "металл", i: "sheet" },
    { big: 35, t: "Деформация", i: "deform" },
  ] },
  { w: 106, label: "Дополнительно", parts: [
    { col: 54, items: [{ t: "Проекция", i: "proj" }, { t: "Размер", i: "size", a: true }, { t: "Преобразование", i: "trans" }] },
    { col: 48, items: [{ t: "Сопряжения", i: "mate", a: true }, { t: "Переменные", i: "vars" }, { t: "Группы", i: "group" }] },
  ] },
];

const tree: any[] = [
  { l: 0, a: "▼", ic: ["folder"], t: "3D Построения [8]", eye: "eye" },
  { l: 1, a: "▷", ic: ["folder"], t: "3D Профили [4]", eye: "eye" },
  { l: 1, a: "▼", ic: ["folder"], t: "Рабочие плоскости [4]", eye: "eye" },
  { l: 2, a: "", ic: ["plane"], t: "Вид спереди", eye: "eye" },
  { l: 2, a: "▶", ic: ["plane"], t: "РП 1", eye: "eye" },
  { l: 2, a: "▶", ic: ["plane"], t: "РП 2", eye: "eye" },
  { l: 2, a: "▶", ic: ["plane"], t: "РП 3", eye: "eye" },
  { l: 0, a: "▷", ic: ["folder"], t: "Геометрические элементы [24]", eye: "eyeDim" },
  { l: 0, a: "▷", ic: ["folder"], t: "Материалы [1]", eye: "eyeDim" },
  { l: 0, a: "▷", ic: ["folder"], t: "Операции [17]", eye: "eye" },
  { l: 0, a: "▷", ic: ["folder"], t: "Проекции [3]", eye: "eyeDim" },
  { l: 0, a: "▼", ic: ["gbox", "tbox"], t: "Тело_1", eye: "eye" },
  { l: 1, a: "▷", ic: ["ext"], t: "Выталкивание_1", eye: "eyeDim", s: 1 },
  { l: 1, a: "▷", ic: ["mini", "ext"], t: "Выталкивание_2", eye: "eyeDim", s: 1 },
  { l: 1, a: "▷", ic: ["mini", "ext"], t: "Выталкивание_3", eye: "eyeDim", s: 1 },
  { l: 1, a: "▷", ic: ["mini", "ext"], t: "Выталкивание_4", eye: "eyeDim", s: 1 },
  { l: 1, a: "", ic: ["simpl"], t: "Упрощение_1", eye: "eyeDim", s: 1 },
  ...Array.from({ length: 8 }, (_, i) => ({ l: 1, a: "▷", ic: ["sm"], t: `Сглаживание_${i + 1}`, eye: "eyeDim", s: 1 })),
  { l: 1, a: "▷", ic: ["sm"], t: "Сглаживание_9", eye: "eyeDim" },
];

const leftIcons = ["okGreen", "rows", "branch", "xRed", "dim", "zoomI", "angle", "pink", "boxes", "arc", "yellowD", "redSq"];
const rightIcons = ["plane", "magnet", "zoomI", "zoomI", "zoomI", "tilde", "tilde", "tilde", "checkBox", "checkBox", "arc", "boxes", "ballG", "sqY", "triB", "ballB", "tag", "frame"];

const Shape = ({ v }: { v: number }) => (
  <svg width="16" height="14" viewBox="0 0 16 14">
    <path d="M1 13V9l4-2v6zM15 13V9l-4-2v6z" fill={v % 2 ? "#3f90cf" : "#7db4de"} />
    <path d="M8 1l5 5-5 5-5-5z" fill="#f2e02e" stroke="#7f7414" strokeWidth=".6" />
    {v > 2 && <path d="M11 1h4v5" fill="none" stroke="#c83030" strokeWidth=".6" />}
    {v > 2 && <path d="M2 2h5" stroke="#222" strokeWidth=".6" />}
  </svg>
);

const Part = () => (
  <PartSvg viewBox="150 150 310 330">
    <g stroke="#2b2b26" strokeWidth="0.8" strokeLinejoin="round">
      <path d="M267 235l4-2 21 10v5l-20-8z" fill="#dcdcd2" />
      <path d="M183 320L209 302Q217 292 228 278L289 242L293 248L200 375L226 399Q198 398 190 372Z" fill="#e3e3da" />
      <path d="M308 205L363 167Q388 153 412 163Q430 176 432 203L400 240L328 216Z" fill="#e3e3da" />
      <path d="M193 323L213 306Q222 290 233 283L292 246Q298 262 307 263Q325 262 332 230Q333 222 328 216L370 173Q390 159 410 167Q429 182 432 204Q431 232 417 250Q405 266 393 277L367 298L374 305L263 383Q240 400 226 399Q205 395 195 370Z" fill="#6d6c5e" />
      <path d="M292 246Q298 262 307 263Q325 262 332 230Q333 222 328 216L308 205Q315 216 310 233Q303 242 292 247Z" fill="#e6e6dc" />
      <path d="M328 216Q331 245 345 275Q353 290 367 298" fill="none" />
      <ellipse cx="250" cy="336" rx="17" ry="26.500" transform="rotate(22 250 336)" fill="#d7d7ca" />
      <ellipse cx="247" cy="337" rx="13" ry="21.500" transform="rotate(22 247 337)" fill="#fff" />
      <path d="M236 333Q238 320 255 316Q261 330 258 343L234 338Z" fill="#ecece0" strokeWidth="0.4" />
    </g>
    <path d="M203 320l-13-2M196 371l-7 4M229 281l3 4M214 305l-4-3M362 168l7 5" stroke="#9d9d90" strokeWidth="0.6" />
    <ellipse cx="387" cy="229" rx="18" ry="23" transform="rotate(22 387 229)" fill="#e8ea83" stroke="#4a4a30" strokeWidth="0.6" />
    <ellipse cx="394" cy="230" rx="10" ry="16" transform="rotate(22 394 230)" fill="#f5f5d8" />
    <ellipse cx="399" cy="231" rx="9" ry="15" transform="rotate(22 399 231)" fill="#77765e" />
    <ellipse cx="398" cy="231" rx="13" ry="20" transform="rotate(25 398 231)" fill="none" stroke="#42c46a" strokeWidth="1.400" />
    <path d="M385 209h4v4h-4zM396 240h4v4h-4zM391 246h4v4h-4z" fill="#f0d020" />
    <rect x="395" y="218" width="15" height="7" fill="#fff" stroke="#777" strokeWidth="0.4" />
    <text x="396" y="223.500" fontSize="5.500" fill="#222" fontFamily="Liberation Sans, sans-serif">к.53</text>
    <circle cx="393" cy="216.500" r="1.300" fill="#222" />
  </PartSvg>
);

export default function App() {
  return (
    <>
      <Global />
      <Page>
        <TitleBar>
          <Quick>
            {["logo", "menu", "doc", "blue", "grid", "folderO", "save", "print", "undo", "redo", "pic", "grid"].map((k, i) => (
              <Ico key={i} k={k} s={i === 0 ? 9 : 8} />
            ))}
          </Quick>
          <TitleText>T-FLEX CAD 17 Учебная версия - C:\Users\Александр\Desktop\Модель с переменными\Звено.grs</TitleText>
          <WinControls><span>–</span><span>▫</span><span>×</span></WinControls>
        </TitleBar>
        <MenuRow>
          <FileTab>Файл</FileTab>
          <ActiveMenu>3D Модель</ActiveMenu>
          <MenuItems>
            {["Чертёж", "Сборка", "Оформление", "Спецификации", "Параметры", "Измерение", "Анализ", "Редактирование", "Инструменты", "Вид"].map((m) => (
              <span key={m}>{m}</span>
            ))}
          </MenuItems>
          <MenuRight>
            <span>▾</span><Ico k="zoomI" /><Ico k="help" /><span>▾</span><Ico k="gear" /><span>▾</span><Ico k="flag" /><Ico k="pic" /><span>▾</span>
          </MenuRight>
        </MenuRow>
        <Ribbon>
          <Group $w={100}>
            <GroupBody>
              <Col $w={98}>
                <StyleRow><Ico k="layers" /><Combo $w={83} $bold>Основной</Combo></StyleRow>
                <StyleRow><Ico k="layers" /><Combo $w={18}>0</Combo><Combo $w={63} /></StyleRow>
                <StyleRow><Ico k="palette" /><Ico k="shield" /><Swatch /><Combo $w={63} /></StyleRow>
              </Col>
            </GroupBody>
            <GroupLabel>Стиль</GroupLabel>
          </Group>
          {groups.map((g, gi) => (
            <Group key={g.label} $w={g.w} $last={gi === groups.length - 1}>
              <GroupBody>
                {g.parts.map((p, i) =>
                  p.big ? (
                    <Big key={i} $w={p.big} $on={p.on}>
                      <BigIconSlot><Ico k={p.i} s={17} /></BigIconSlot>
                      {p.t}
                      {p.t2 && <br />}
                      {p.t2}
                      {p.on && <Arrow>▾</Arrow>}
                    </Big>
                  ) : (
                    <Col key={i} $w={p.col}>
                      {p.items.map((it: Item) => (
                        <Small key={it.t}><Ico k={it.i} />{it.t}{it.a && <Arrow>▾</Arrow>}</Small>
                      ))}
                    </Col>
                  )
                )}
              </GroupBody>
              <GroupLabel>{g.label}</GroupLabel>
            </Group>
          ))}
        </Ribbon>
        <DocTabs>
          <DocActive><Ico k="logo" s={7} />* Звено.grs ×</DocActive>
          <DocOther><Ico k="grid" s={7} />Приветствие</DocOther>
        </DocTabs>
        <Divider />
        <Main>
          <LeftRail>
            <LeftStrip>
              {leftIcons.map((k, i) => (
                <RailBtn key={i} $on={k === "pink"}><Ico k={k} s={11} /></RailBtn>
              ))}
            </LeftStrip>
          </LeftRail>
          <Canvas>
            <Part />
            <TreeToolbar>
              <Ico k="close" s={6} />
              <Ico k="back" s={7} />
              <Ico k="fwd" s={7} />
              <Ico k="home" s={7} />
              <Ico k="clock" s={7} />
              <Ico k="xbox" s={7} />
              <Push />
              <Ico k="wrench" s={8} />
              <Ico k="back" s={5} />
            </TreeToolbar>
            <Tree>
              {tree.map((r) => (
                <TreeRow key={r.t} $lvl={r.l}>
                  <Tw>{r.a}</Tw>
                  <Ico k={r.eye} s={7} />
                  {r.ic.map((k: string, i: number) => <Ico key={i} k={k} s={r.ic.length > 1 && i === 0 ? 6 : 7.500} />)}
                  <TreeLabel $mode={r.s ? "sel" : "plain"}>{r.t}</TreeLabel>
                </TreeRow>
              ))}
            </Tree>
            <ViewBar>
              <ViewPart>
                <Ico k="funnel" s={7} /><Ico k="gbox" s={7} /><Ico k="gbox" s={7} /><Ico k="redbar" s={7} /><span>▾</span><Ico k="line" s={7} /><Ico k="line" s={7} />
              </ViewPart>
              <ViewPart $tint>
                <Ico k="cubeP" s={7.500} /><Ico k="cubeP" s={7.500} /><Ico k="cubeN" s={7.500} /><Ico k="cubeN" s={7.500} /><Ico k="cubeN" s={7.500} />
              </ViewPart>
            </ViewBar>
            <Dialog>
              <DlgHead><span>Сглаживание рёбер</span><span>⚲ ×</span></DlgHead>
              <DlgBtns>
                <DlgBtn><Ico k="okGreen" s={8} /></DlgBtn>
                <DlgBtn><Ico k="layers" s={7} /></DlgBtn>
                <DlgBtn><Ico k="layers" s={7} /></DlgBtn>
                <DlgBtn><Ico k="xRed" s={8} /></DlgBtn>
              </DlgBtns>
              <Section><SecMark />Основные параметры</Section>
              <ShapeRow>
                {[0, 1, 2, 3, 4, 5].map((v) => (
                  <ShapeBtn key={v} $on={v === 0}><Shape v={v} /></ShapeBtn>
                ))}
              </ShapeRow>
              <Tabs>
                <Tab $w={18} $on>Рёбра</Tab><Tab $w={26}>Вершины</Tab><Tab $w={21}>Грани</Tab><Tab $w={24}>Обрезка</Tab>
              </Tabs>
              <Pane>
                <ListBox>
                  <ListHead><span>Элемент</span><span>Радиус</span></ListHead>
                  <ListSel><span>▭ Ребро_31 : Сглаживание_9</span><span>[1.5]</span></ListSel>
                  <ListRow><Check /> ···</ListRow>
                </ListBox>
                <SideBtns><SideBtn>▲</SideBtn><SideBtn>▬</SideBtn><SideBtn>✕</SideBtn></SideBtns>
              </Pane>
              <CheckRow $pad={5} $h={7}><Check />Общие свойства</CheckRow>
              <RadiusRow>Радиус:<Field $w={97}>"*3</Field></RadiusRow>
              <OffsetTitle>Отступ</OffsetTitle>
              <OffsetBox>
                <OffsetRow><Check /><OffsetName>Начало</OffsetName><Field $w={82} $tone="#f4f4f4">0</Field></OffsetRow>
                <OffsetRow><Check /><OffsetName>Конец</OffsetName><Field $w={82} $tone="#f4f4f4">0</Field></OffsetRow>
              </OffsetBox>
              <CheckRow $pad={7}><Check $on>✓</Check>Продолжить по касательной</CheckRow>
              <CheckRow $pad={7}><Check />Сначала вогнутые</CheckRow>
              <Spacer $h={3} />
              <CheckRow $pad={4}><Check $on>✓</Check>Удалить элементы</CheckRow>
              <CheckRow $pad={4}><Check />Непрерывность по кривизне</CheckRow>
              <Section><SecMark />Обработка перекрытий</Section>
              <Spacer $h={1} />
              <Section><SecMark />Опции</Section>
              <Spacer $h={3} />
              <CheckRow $pad={4}><Check $on>✓</Check>Использовать манипуляторы</CheckRow>
              <CheckRow $pad={4}><Check $on>✓</Check>Использовать метки</CheckRow>
              <CheckRow $pad={4}><Check $on>✓</Check>Динамический просмотр</CheckRow>
              <CheckRow $pad={4}><Check />Создать управляющие размеры</CheckRow>
              <RedFrame />
            </Dialog>
            <Ellipse viewBox="0 0 60 34">
              <ellipse cx="29" cy="16" rx="26" ry="14.500" transform="rotate(-3 29 16)" fill="none" stroke="#c4202c" strokeWidth="1.800" />
            </Ellipse>
            <Watermark>
              Активация Windows
              <WatermarkSub>Чтобы активировать Windows, перейдите в раздел "Параметры".</WatermarkSub>
            </Watermark>
            <TriadSvg viewBox="0 0 50 40">
              <path d="M24 26L20 9" stroke="#1a2fa8" strokeWidth="1.500" />
              <path d="M20 6l-2.500 6h5z" fill="#1a2fa8" />
              <path d="M24 26L9 21" stroke="#2f8a3c" strokeWidth="1.500" />
              <path d="M7 20l6-1-1.500 4.500z" fill="#2f8a3c" />
              <path d="M24 26L38 16" stroke="#a8243a" strokeWidth="1.500" />
              <path d="M40 14.500l-6 1.500 3 4z" fill="#a8243a" />
              <text x="24" y="9" fontSize="5" fill="#8088a0" fontFamily="Liberation Sans, sans-serif">Z</text>
              <text x="39" y="11" fontSize="5" fill="#c86a70" fontFamily="Liberation Sans, sans-serif">X</text>
              <text x="9" y="15" fontSize="5" fill="#7abf86" fontFamily="Liberation Sans, sans-serif">Y</text>
            </TriadSvg>
            <CornerTools><Ico k="split" s={8} /><Ico k="splitH" s={8} /></CornerTools>
          </Canvas>
          <RightRail>
            <RightStrip>
              {rightIcons.map((k, i) => (
                <StripBtn key={i} $on={i === 5}><Ico k={k} s={11} /></StripBtn>
              ))}
            </RightStrip>
          </RightRail>
        </Main>
        <StatusBar>3DE: Создать операцию сглаживания рёбер</StatusBar>
        <Taskbar>
          <Task $w={22}><Ico k="win" s={8} /></Task>
          <Task $w={22}><Ico k="search" s={8} /></Task>
          <Task $w={22} $bar><Ico k="chrome" s={11} /></Task>
          <Task $w={22}><Ico k="cblue" s={11} /></Task>
          <Task $w={22} $on $bar><Ico k="tflex" s={11} /></Task>
          <Task $w={22}><Ico k="app" s={11} /></Task>
          <Tray>
            <Ico k="caret" s={7} />
            <Ico k="trayF" s={7} />
            <span>ENG</span>
            <Clock>19:13:41<br />07.03.2021</Clock>
            <Ico k="note" s={10} />
          </Tray>
        </Taskbar>
      </Page>
    </>
  );
}
